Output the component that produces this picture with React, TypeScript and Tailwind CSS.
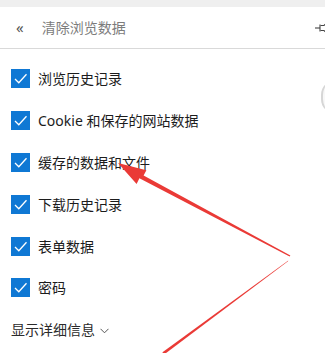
const items = [
  "浏览历史记录",
  "Cookie 和保存的网站数据",
  "缓存的数据和文件",
  "下载历史记录",
  "表单数据",
  "密码",
];

const font = {
  fontFamily: '"Noto Sans", "Noto Sans CJK SC", sans-serif',
};

function CheckBox() {
  return (
    <span className="flex h-[19px] w-[19px] shrink-0 items-center justify-center bg-[#0f78d4]">
      <svg width="15" height="15" viewBox="0 0 15 15" fill="none">
        <path d="M2 8 L5.8 11.8 L13.5 3.2" stroke="white" strokeWidth="1.3" />
      </svg>
    </span>
  );
}

export default function App() {
  return (
    <div
      className="relative h-[353px] w-[325px] overflow-hidden bg-white"
      style={font}
    >
      <div className="h-[7px] bg-[#efefef]" />
      <header className="flex h-[42px] items-center border-b border-[#d9d9d9] pl-[16px]">
        <span className="text-[15px] leading-none text-[#555]">«</span>
        <span className="ml-[18px] text-[14px] text-[#7c7c7c]">清除浏览数据</span>
        <svg
          className="ml-auto -mr-[5px]"
          width="16"
          height="12"
          viewBox="0 0 16 12"
          fill="none"
          stroke="#444"
          strokeWidth="1.1"
        >
          <path d="M1 6 H6" />
          <path d="M6 2.5 V9.5" />
          <path d="M6.5 3.5 H10 L11.5 2 H16 M6.5 8.5 H10 L11.5 10 H16" />
        </svg>
      </header>

      <ul className="pt-[9px]">
        {items.map((label) => (
          <li key={label} className="flex h-[41.8px] items-center gap-[8px] pl-[11px]">
            <CheckBox />
            <span className="text-[14px] text-[#1c1c1c]">{label}</span>
          </li>
        ))}
        <li className="flex h-[41.8px] items-center pl-[11px] text-[14px] text-[#2a2a2a]">
          显示详细信息
          <svg className="ml-[5px] mt-[3px]" width="9" height="6" viewBox="0 0 9 6" fill="none">
            <path d="M0.5 0.8 L4.5 4.8 L8.5 0.8" stroke="#555" strokeWidth="1" />
          </svg>
        </li>
      </ul>

      <div className="absolute left-[321px] top-[80px] h-[34px] w-[30px] rounded-full border-l-2 border-[#d6d6d6] bg-[#f8f8f8]" />

      <svg
        className="pointer-events-none absolute left-0 top-0"
        width="325"
        height="353"
        viewBox="0 0 325 353"
      >
        <polygon
          fill="#ea3a36"
          points="290.4,255.4 289.6,256.6 139.4,178.3 136.6,184.0 118,163 146.4,170.2 143.6,175.6"
        />
        <polygon
          fill="#ea3a36"
          points="288.3,260.4 287.7,261.4 156.8,360.0 163.2,351.8"
        />
      </svg>
    </div>
  );
}
